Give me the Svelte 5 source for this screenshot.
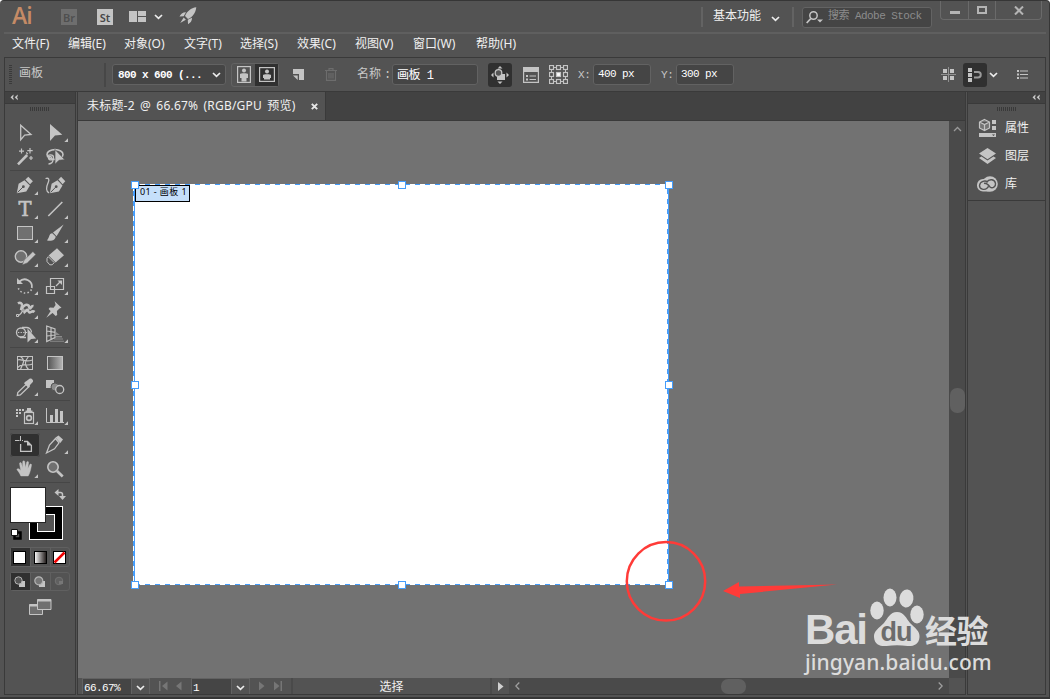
<script lang="ts">
  type Tool = { id: string; icon: string; more?: boolean };

  const menus = [
    { label: "文件(F)", w: 56 },
    { label: "编辑(E)", w: 56 },
    { label: "对象(O)", w: 60 },
    { label: "文字(T)", w: 56 },
    { label: "选择(S)", w: 57 },
    { label: "效果(C)", w: 58 },
    { label: "视图(V)", w: 58 },
    { label: "窗口(W)", w: 63 },
    { label: "帮助(H)", w: 50 },
  ];

  // Icons are drawn in a 30x24 cell.
  const groups: Tool[][] = [
    [
      { id: "direct", icon: `<path d="M10.700 4.300v14.400l4-4.600 6.300-.6z" fill="none" stroke="currentColor" stroke-width="1.300"/>` },
      { id: "select", more: true, icon: `<path d="M10 3v17l5-5.400 7.300-.9z"/>` },
      { id: "wand", icon: `<path d="M8 19.300L17.200 10" stroke="currentColor" stroke-width="2.600"/><path d="M11.500 3.600v5M9 6.100h5M20 3v5.400M17.300 5.700h5.400M21 11v4M19 13h4M16.200 7.500l1.600 1.600" stroke="currentColor" stroke-width="1.200"/>` },
      { id: "lasso", icon: `<ellipse cx="15" cy="9.500" rx="8" ry="4.900" fill="none" stroke="currentColor" stroke-width="1.600"/><path d="M7.500 12c0-3 6-3 6 .4s-5 3.200-5 .6 3.200-1.600 3.200.2M13 14c.5 3-1.500 4.800-4.500 5" fill="none" stroke="currentColor" stroke-width="1.300"/><path d="M15 4.500v14.800l4-4 5.800-.6z" stroke="#535353" stroke-width=".7"/>` },
    ],
    [
      { id: "pen", more: true, icon: `<path d="M6.800 19.200l1.800-9.400 5.900-3.600 5.400 5.300-3.600 5.900z"/><path d="M15.400 5.400l2.900-2.700 4.600 4.600-2.900 2.900z"/><path d="M7.600 18.400l5.400-5.400" stroke="#535353"/><circle cx="13.400" cy="12.700" r="1.400" fill="#535353"/>` },
      { id: "curve", icon: `<path d="M9.800 19.200l1.800-9.400 5.900-3.600 5 5.300-3.600 5.900z"/><path d="M18.400 5.400l2.700-2.700 4.200 4.600-2.700 2.900z"/><path d="M10.600 18.400l5.200-5.400" stroke="#535353"/><circle cx="16.200" cy="12.700" r="1.400" fill="#535353"/><path d="M5.500 4.500c3.500-1 4 1 2.700 4-1.800 4-3 8.500.8 10.300" fill="none" stroke="currentColor" stroke-width="1.300"/>` },
      { id: "type", more: true, icon: `<text x="15" y="18" text-anchor="middle" font-family="DejaVu Serif, serif" font-size="19.500" stroke="currentColor" stroke-width=".600">T</text>` },
      { id: "line", more: true, icon: `<path d="M8.300 18L22.300 4" stroke="currentColor" stroke-width="1.600"/>` },
      { id: "rect", more: true, icon: `<rect x="7.500" y="4.500" width="15" height="13" fill="#707070" stroke="currentColor"/>` },
      { id: "brush", more: true, icon: `<path d="M23.600 2.600L13 10.600l3.600 3.600z" /><path d="M12.300 11.200c-3.700 0-2.600 5-5.500 7 3.600 1.300 9 .2 8.800-3.700z"/>` },
      { id: "shaper", more: true, icon: `<circle cx="11" cy="10.500" r="5.700" fill="#707070" stroke="currentColor" stroke-width="1.400"/><path d="M12.200 19l1.900-4.900 8.800-8.500 2.900 2.900-8.500 8.400z" stroke="#535353" stroke-width=".5"/>` },
      { id: "eraser", more: true, icon: `<path d="M17 2.300l7 6.900-8.400 7.300-7-6.900z"/><path d="M8.300 10.700l5.900 5.900-2 2.200H9.800L7 15.600v-3.200z" fill="none" stroke="currentColor"/>` },
    ],
    [
      { id: "rotate", more: true, icon: `<path d="M9.500 7.500A7.300 7.300 0 0 1 21.800 14" fill="none" stroke="currentColor" stroke-width="1.800"/><path d="M21.500 15.500A7.300 7.300 0 0 1 8.300 14" fill="none" stroke="currentColor" stroke-width="1.500" stroke-dasharray="1.500 2.200"/><path d="M7 4v6h6z"/>` },
      { id: "scale", more: true, icon: `<path d="M10.500 4.500h13v11h-13zM6.500 12.500h8v7h-8z" fill="none" stroke="currentColor" stroke-width="1.200"/><path d="M16 12l4.500-4.500" stroke="currentColor" stroke-width="1.200"/><path d="M17.500 6.500H22V11z"/>` },
      { id: "warp", more: true, icon: `<path d="M8 5.500c2-1.500 4.500-.5 4 2.500l-1 4c2-4 5-6.500 7.500-4.500 1 1 .5 3 1.500 3s1-3 3.500-2.500M13.500 15c2-1 3.500-4.500 4.500-2.500s1.500 2.500 3 1.500 2.500-1 3.500 0" fill="none" stroke="currentColor" stroke-width="2.600"/><path d="M7.500 17.500c3 0 4-3 5.500-5.500" fill="none" stroke="currentColor" stroke-width="1.200"/><path d="M6.500 16.500h2v2h-2zM12 11h2v2h-2z" fill="#535353" stroke="currentColor"/>` },
      { id: "pin", more: true, icon: `<path d="M14.600 3.200l6.900 6.500-2 .8-2.600 2.600.3 3.800-1.600 1-7-7 1.200-1.500 3.800.4 2-2.700zM10.800 12.800l2 2-6.500 5z"/>` },
      { id: "builder", more: true, icon: `<circle cx="11" cy="10.500" r="4.500" fill="none" stroke="currentColor" stroke-width="1.300"/><path d="M12 5.500h5a5 5 0 0 1 4.500 5M10 15.500h6" fill="none" stroke="currentColor" stroke-width="1.300"/><path d="M8 10.500h10" stroke="currentColor" stroke-dasharray="1.300 1.300"/><path d="M17.500 6.500v14l3.600-3.500 5-.500z"/>` },
      { id: "perspective", more: true, icon: `<path d="M6.700 4v15.500L15 15.500V7zM11 5.700v11.700M7 9l8 1.300M7 14l8-1" fill="none" stroke="currentColor" stroke-width="1.200"/><path d="M16 10l4 3h-4zM16 14h6v1.500h-6zM14 16.500h9v1h-9zM10 18.800h14v1H10z" opacity=".5"/>` },
    ],
    [
      { id: "mesh", icon: `<rect x="7.500" y="5.500" width="15" height="13" fill="none" stroke="currentColor"/><path d="M7.500 9c4-2 6 3 15 0M7.500 17c4-6 9-1 15-4M10.500 5.500c6 4 2 7 0 13M18.500 5.500c-3 4-5 7 0 13" fill="none" stroke="currentColor" stroke-width="1.200"/>` },
      { id: "gradient", icon: `<defs><linearGradient id="tg"><stop offset="0" stop-color="#535353"/><stop offset="1" stop-color="#b5b5b5"/></linearGradient></defs><rect x="7.500" y="5.500" width="15" height="13" fill="url(#tg)" stroke="currentColor"/>` },
      { id: "dropper", more: true, icon: `<path d="M7.300 20.500l.500-3 8.500-8.200 2.500 2.500-8.500 8.200z" fill="none" stroke="currentColor" stroke-width="1.300"/><path d="M15 7l1.500-1 3-2.300c1.800-1 4.500 1.300 3.300 3.300L20 10l-.500 2-1 .8L14 8.200z"/>` },
      { id: "blend", icon: `<path d="M6 5h8v8H6z"/><circle cx="15" cy="12" r="4" fill="#8b8b8b" stroke="#535353"/><circle cx="19.700" cy="14.500" r="4" fill="#535353" stroke="currentColor" stroke-width="1.300"/>` },
    ],
    [
      { id: "spray", more: true, icon: `<path d="M6 5h2v2H6zM9 5h2v2H9zM12 5h2v2h-2zM6 8h2v2H6zM9 8h2v2H9zM6 11h2v2H6zM17 4h4v3h-4zM15.500 6.500h7v2h-7z"/><rect x="14.500" y="8.500" width="9" height="11" fill="none" stroke="currentColor" stroke-width="1.200"/><circle cx="19" cy="14" r="2.400" fill="none" stroke="currentColor" stroke-width="1.600"/>` },
      { id: "graph", more: true, icon: `<path d="M6.500 4v14.500H24" fill="none" stroke="currentColor"/><path d="M10 11h3v7h-3zM15 5h3v13h-3zM20 7h3v11h-3z"/>` },
    ],
    [
      { id: "artboard", icon: `<path d="M10.500 3v5M5 7.500h4.500M12 7.500h1" stroke="currentColor"/><path d="M10.600 11v7.400h10.800v-6l-3.900-3.900H14" fill="none" stroke="currentColor" stroke-width="1.300"/><path d="M17 8v4.500h5z"/>` },
      { id: "slice", more: true, icon: `<path d="M6.500 20L9.500 12l6-6.500 3.500 4.300-4.500 6z" fill="none" stroke="currentColor" stroke-width="1.300"/><path d="M15.500 4.500L18.500 2.500l4.500 4-2.700 3.500zM6.500 20L14 12"/>` },
      { id: "hand", more: true, icon: `<path d="M10.800 19c-1-3-3-5-4-6.600.8-1.400 2.600-.7 3.900 1L9.500 6.500c.2-1.300 1.700-1.300 2 0l1.100 4.300L12.700 4.700c.3-1.300 1.900-1.200 2.100 0l.6 5.800 1.300-5.400c.5-1.200 1.900-.8 1.900.4l-.8 6 2-4c.7-1 2-.4 1.700.8-.7 3.300-1.300 7.700-3.300 10.700z" stroke="currentColor" stroke-width=".4"/>` },
      { id: "zoom", icon: `<circle cx="13" cy="10" r="5.200" fill="#707070" stroke="currentColor" stroke-width="1.600"/><path d="M17 14l5.700 5.500" stroke="currentColor" stroke-width="2.700"/>` },
    ],
  ];

  const handleX = [2, 269, 536];
  const handleY = [1, 201, 401];
  const handles = handleY
    .flatMap((y) => handleX.map((x) => ({ x, y })))
    .filter((h) => h.x !== handleX[1] || h.y !== handleY[1]);

  const refPoints = [0, 1, 2].flatMap((r) => [0, 1, 2].map((c) => ({ x: 0.5 + c * 7, y: 0.5 + r * 7 })));

  let active = $state("artboard");
  let artboardName = $state("画板 1");
  let posX = $state("400 px");
  let posY = $state("300 px");
</script>

{#snippet chevron()}
  <svg class="chev" width="9" height="6" viewBox="0 0 9 6"><path d="M1 1l3.500 3.300L8 1" fill="none" stroke="currentColor" stroke-width="1.700" /></svg>
{/snippet}

{#snippet collapse()}
  <svg width="8" height="7" viewBox="0 0 8 7"><path d="M3.500.5L.5 3.300l3 2.900V4.300L2.700 3.300l.8-1zM7.700.5l-3 2.800 3 2.900V4.300L6.900 3.300l.8-1z" fill="currentColor" /></svg>
{/snippet}

<div class="window">
  <header class="titlebar">
    <span class="logo">Ai</span>
    <span class="appbox dim">Br</span>
    <span class="appbox">St</span>
    <svg class="layout" width="17" height="11" viewBox="0 0 17 11"><path d="M0 0h8v11H0zM9 0h8v5H9zM9 6h8v5H9z" fill="#c4c4c4" /></svg>
    {@render chevron()}
    <svg class="rocket" width="18" height="18" viewBox="0 0 18 18"><path d="M17.300.2C12 .8 7.800 4.500 6 9l3 3c4.500-2 7.700-6 8.300-11.800zM7 5.200C4 5 1.500 7 .5 9.500l4.200-.2zM13 10.800c.2 3-1.500 5.200-4 6.500l-.2-4.500zM4.700 10.500L1.200 16l5.700-3.300z" fill="#c4c4c4" /></svg>
    <i class="vsep first"></i>
    <span class="workspace">基本功能</span>
    <span class="wschev">{@render chevron()}</span>
    <i class="vsep second"></i>
    <div class="search">
      <svg width="17" height="13" viewBox="0 0 17 13"><circle cx="7.500" cy="4.500" r="3.700" fill="none" stroke="#c4c4c4" stroke-width="1.500" /><path d="M4.800 7.500L.7 12" stroke="#c4c4c4" stroke-width="1.800" /><path d="M11 8.500h6l-3 3z" fill="#c4c4c4" /></svg>
      <span>搜索 Adobe Stock</span>
    </div>
    <div class="winbtns">
      <button aria-label="Minimize"><svg width="10" height="14" viewBox="0 0 10 14"><path d="M0 8h10v3H0z" /></svg></button>
      <button aria-label="Maximize"><svg width="10" height="10" viewBox="0 0 10 10"><path d="M1 2h8v6H1z" fill="none" stroke="#b4b4b4" stroke-width="2" /></svg></button>
      <button aria-label="Close"><svg width="10" height="9" viewBox="0 0 10 9"><path d="M1 .5l8 8M9 .5l-8 8" stroke="#b4b4b4" stroke-width="2" /></svg></button>
    </div>
  </header>

  <nav class="menubar">
    {#each menus as m (m.label)}<span style:width="{m.w}px">{m.label}</span>{/each}
  </nav>

  <div class="control">
    <i class="grip"></i>
    <span class="lbl title">画板</span>
    <i class="csep"></i>
    <div class="preset"><b>800 x 600 (...</b>{@render chevron()}</div>
    <div class="orient">
      <span><svg width="14" height="17" viewBox="0 0 14 17"><rect x=".6" y=".6" width="12.800" height="15.800" fill="none" stroke="#c4c4c4" stroke-width="1.200" /><circle cx="7" cy="4.500" r="2" /><path d="M3 8c0-1 8-1 8 0v4H9.500v3.500h-5V12H3z" /></svg></span>
      <span class="on"><svg width="16" height="15" viewBox="0 0 16 15"><rect x=".6" y=".6" width="14.800" height="13.800" fill="none" stroke="#c4c4c4" stroke-width="1.200" /><circle cx="8" cy="4.500" r="2" /><path d="M4 8c0-1 8-1 8 0v3h-1v1.500H5V11H4z" /></svg></span>
    </div>
    <svg class="newab" width="11" height="11" viewBox="0 0 11 11"><path d="M0 0h11v11H6V5H0zM0 6.500h4.700V11z" fill="#c4c4c4" /></svg>
    <svg class="trash" width="12" height="13" viewBox="0 0 12 13"><path d="M0 2.500h12M4 2V.6h4V2M1.500 3v9.400h9V3M4 5v5.500M6 5v5.500M8 5v5.500" fill="none" stroke="#6d6d6d" stroke-width="1.100" /></svg>
    <span class="lbl name">名称<em>:</em></span>
    <input class="field wide" bind:value={artboardName} />
    <span class="sq move"><svg width="18" height="18" viewBox="0 0 18 18"><path d="M9 0l2.500 2.500h-5zM9 18l2.500-2.500h-5zM0 9l2.500-2.500v5zM18 9l-2.500-2.500v5zM9 8h5v6H6v-3z" fill="#c4c4c4" /><circle cx="7.500" cy="7" r="3.300" fill="#555" stroke="#c4c4c4" stroke-width="1.300" /></svg></span>
    <svg class="opts" width="16" height="16" viewBox="0 0 16 16"><path d="M0 0h16v5H0zM3 8h2v2H3zM3 11.500h2v2H3zM6.500 8.500H13v1H6.500zM6.500 12H13v1H6.500z" fill="#c4c4c4" /><path d="M.6 4v11.400h14.800V4" fill="none" stroke="#c4c4c4" stroke-width="1.200" /></svg>
    <svg class="refpt" width="19" height="19" viewBox="0 0 19 19">
      <path d="M5 2.500h2M12 2.500h2M5 16.500h2M12 16.500h2M2.500 5v2M2.500 12v2M16.500 5v2M16.500 12v2" stroke="#c4c4c4" />
      {#each refPoints as p, i (i)}
        <rect x={p.x} y={p.y} width="4" height="4" fill={i === 4 ? "#fff" : "none"} stroke="#c4c4c4" stroke-width="1.200" />
      {/each}
    </svg>
    <span class="lbl px">X:</span>
    <input class="field" bind:value={posX} />
    <span class="lbl py">Y:</span>
    <input class="field" bind:value={posY} />
    <span class="grow"></span>
    <svg class="cross" width="15" height="15" viewBox="0 0 15 15"><path d="M2 2h4v4H2zM9 2h4v4H9zM2 9h4v4H2zM9 9h4v4H9z" fill="#c4c4c4" /><path d="M7.500 0v15M0 7.500h15" stroke="#909090" /></svg>
    <span class="sq snap"><svg width="14" height="14" viewBox="0 0 14 14"><path d="M0 0h4v4H0zM0 5h4v4H0zM0 10h4v4H0z" fill="#c4c4c4" /><path d="M6 4h4a2.700 2.700 0 0 1 0 5.500H6" fill="none" stroke="#9a9a9a" stroke-width="2" /></svg></span>
    {@render chevron()}
    <svg class="list" width="11" height="9" viewBox="0 0 11 9"><path d="M0 0h2v2H0zM0 3.500h2v2H0zM0 7h2v2H0zM3 .5h8v1H3zM3 4h8v1H3zM3 7.500h8v1H3z" fill="#c4c4c4" /></svg>
  </div>

  <div class="body">
    <aside class="toolbox">
      <div class="phead">{@render collapse()}</div>
      <div class="ridges"></div>
      <div class="tools">
        {#each groups as g, gi (gi)}
          <div class="group">
            {#each g as t (t.id)}
              <button class="tool" class:active={active === t.id} aria-label={t.id} onclick={() => (active = t.id)}>
                <svg width="30" height="24" viewBox="0 0 30 24" fill="currentColor">
                  {@html t.icon}
                  {#if t.more}<path d="M28 17.300V21h-3.700z" />{/if}
                </svg>
              </button>
            {/each}
          </div>
        {/each}
      </div>
      <svg class="swatches" width="60" height="56" viewBox="10 487 60 56">
        <rect x="29.500" y="507.500" width="33" height="33" fill="#000" stroke="#fff" />
        <rect x="37.500" y="515.500" width="17" height="17" fill="#535353" stroke="#fff" />
        <rect x="10.500" y="488.500" width="35" height="35" fill="#fff" stroke="#262626" />
        <path d="M58 493.500h2.500q2 0 2 2v3" fill="none" stroke="#c4c4c4" stroke-width="1.500" />
        <path d="M58.500 490v7l-4-3.500zM59 497h7l-3.500 4z" fill="#c4c4c4" />
        <path d="M14.500 533.500h6v6h-6z" fill="none" stroke="#000" stroke-width="2.500" />
        <path d="M11.500 530.500h6v6h-6z" fill="#fff" stroke="#111" />
      </svg>
      <div class="trio paint">
        <span class="on"><svg width="13" height="13"><rect x=".5" y=".5" width="12" height="12" fill="#fff" stroke="#000" /></svg></span>
        <span><svg width="13" height="13"><defs><linearGradient id="pg"><stop offset="0" stop-color="#fff" /><stop offset="1" stop-color="#1b1514" /></linearGradient></defs><rect x=".5" y=".5" width="12" height="12" fill="url(#pg)" stroke="#000" /></svg></span>
        <span><svg width="13" height="13"><rect x=".5" y=".5" width="12" height="12" fill="#fff" stroke="#000" /><path d="M1.500 11.500l10-10" stroke="#f00000" stroke-width="2.500" /></svg></span>
      </div>
      <div class="trio modes">
        <span class="on"><svg width="12" height="12"><path d="M5 5h6v6H5z" fill="#c4c4c4" /><circle cx="4.500" cy="4.500" r="3.700" fill="#555" stroke="#b4b4b4" /></svg></span>
        <span><svg width="12" height="12"><path d="M5 5h6v6H5z" fill="#c4c4c4" /><circle cx="4.800" cy="4.800" r="4" fill="#777" stroke="#b4b4b4" stroke-width="1.200" /></svg></span>
        <span><svg width="12" height="12"><circle cx="5" cy="5" r="3.800" fill="#606060" stroke="#727272" /><path d="M5 5h4v3H5z" fill="#777" /></svg></span>
      </div>
      <svg class="screen" width="23" height="17" viewBox="0 0 23 17"><path d="M.5 5.500h13v10H.5z" fill="#707070" stroke="#c4c4c4" /><path d="M.5 6.500h13" stroke="#c4c4c4" stroke-width="2" /><path d="M8.500.5h13.500v10H8.500z" fill="#707070" stroke="#c4c4c4" /><path d="M8.500 1.500h13.500" stroke="#c4c4c4" stroke-width="2" /></svg>
    </aside>

    <main class="doc">
      <div class="tabs">
        <div class="tab">
          <span>未标题-2 @ 66.67% (RGB/GPU 预览)</span>
          <svg width="7" height="7" viewBox="0 0 7 7"><path d="M.8.8l5.400 5.400M6.200.8L.8 6.200" stroke="#e6e6e6" stroke-width="1.900" /></svg>
        </div>
      </div>
      <div class="view">
        <div class="canvas">
          <div class="artboard">
            <svg width="536" height="401" viewBox="0 0 536 401" stroke="#459dfb">
              <path d="M2 .5H536M2 400.500H536M.5 7V401M534.500 5V401" stroke-dasharray="5 5" />
              <path d="M1.500 0V401M535.500 0V401" />
            </svg>
            <span class="abname">01 - 画板 1</span>
            {#each handles as h (h.x + "-" + h.y)}
              <i class="handle" style:left="{h.x - 4}px" style:top="{h.y - 4}px"></i>
            {/each}
          </div>
          <svg class="note" width="214" height="86" viewBox="625 538 214 86">
            <circle cx="666" cy="581.300" r="39.200" fill="none" stroke="#ff3b38" stroke-width="2.500" />
            <path d="M723 591l16-9v4.500l98-2-97 9.500v4z" fill="#ff3b38" />
          </svg>
        </div>
        <div class="vscroll">
          <svg width="9" height="6" viewBox="0 0 9 6"><path d="M1 5l3.500-3.500L8 5" fill="none" stroke="#9a9a9a" stroke-width="1.300" /></svg>
          <i class="vthumb"></i>
        </div>
      </div>
      <footer class="status">
        <span class="num zoomv">66.67%</span>
        <span class="drop">{@render chevron()}</span>
        <svg class="step s1" width="28" height="10" viewBox="0 0 28 10"><path d="M1 0h1.500v10H1zM9.500.5v9L4 5zM23.500.5v9L18 5z" fill="#767676" /></svg>
        <span class="num page">1</span>
        <span class="drop">{@render chevron()}</span>
        <svg class="step s2" width="28" height="10" viewBox="0 0 28 10"><path d="M1 .5v9L6.500 5zM16 .5v9L21.500 5zM22.500 0H24v10h-1.500z" fill="#767676" /></svg>
        <span class="mode">选择</span>
        <span class="play"><svg width="6" height="9" viewBox="0 0 6 9"><path d="M0 0l5.500 4.500L0 9z" fill="#d0d0d0" /></svg></span>
        <div class="hscroll">
          <svg width="5" height="8" viewBox="0 0 5 8"><path d="M4.300.5L.8 4l3.500 3.500" fill="none" stroke="#a0a0a0" stroke-width="1.300" /></svg>
          <i class="hthumb"></i>
          <svg class="next" width="5" height="8" viewBox="0 0 5 8"><path d="M.7.5L4.200 4 .7 7.500" fill="none" stroke="#a0a0a0" stroke-width="1.300" /></svg>
        </div>
        <i class="corner"></i>
      </footer>
    </main>

    <aside class="dock">
      <div class="phead right">{@render collapse()}</div>
      <div class="ridges"></div>
      <div class="panels">
        <div class="panel">
          <svg width="22" height="20" viewBox="0 0 22 20"><path d="M7.500 1.500l5 2.500v6l-5 2.500-5-2.500V4zM2.500 4l5 2.500 5-2.500M7.500 6.500v6" fill="#757575" stroke="#c4c4c4" stroke-width="1.200" /><path d="M15 2h4v4h-4zM15 8h4v4h-4zM2 15h17v4H2z" fill="#c4c4c4" /><path d="M15 16.500h3l-1.500 1.500z" fill="#444" /></svg>
          <span>属性</span>
        </div>
        <div class="panel">
          <svg width="22" height="20" viewBox="0 0 22 20"><path d="M10.500 2l8.500 5.600-8.500 5.600L2 7.600zM2 12l2.500-1.500 6 4 6-4L19 12l-8.500 6z" fill="#c4c4c4" /></svg>
          <span>图层</span>
        </div>
        <div class="panel">
          <svg width="22" height="20" viewBox="0 0 22 20"><rect x="0" y="5" width="17" height="12.500" rx="6" fill="#c4c4c4" /><circle cx="13" cy="10" r="7.800" fill="#c4c4c4" /><path d="M10.500 8C8.500 6 3 7 2.500 11.500c0 4 5 5 7.700 2.500l1.300-1.500M7 9.500c2.500-1 4 1 6 3.500 2.500 2 6-.5 5.500-3.500-.5-4-6-5.500-9-1" fill="none" stroke="#535353" stroke-width="1.400" /></svg>
          <span>库</span>
        </div>
      </div>
    </aside>
  </div>

  <div class="watermark">
    <div class="wm-top">
      <span class="bai">Bai</span>
      <svg width="56" height="60" viewBox="0 0 56 60">
        <ellipse cx="8" cy="23.500" rx="6.700" ry="9" />
        <ellipse cx="21" cy="10.500" rx="6.500" ry="9" />
        <ellipse cx="37.500" cy="11.500" rx="7" ry="9" transform="rotate(8 37.500 11)" />
        <ellipse cx="48" cy="27.500" rx="6.700" ry="9" />
        <path d="M28 25c7 0 9 6 13 11 5 5 10 8 9.500 14-.5 8-7 9.500-12 9-7-1-14-1-21 0-6 .5-12-1-12.500-9-.5-6 5-9 10-14 4-5 6-11 13-11z" />
        <text x="27" y="54" text-anchor="middle">du</text>
      </svg>
      <span class="jy">经验</span>
    </div>
    <div class="wm-url">jingyan.baidu.com</div>
  </div>
</div>

<style>
  :global(body) { background: #fff; }
  .window {
    --bg: #535353; --line: #3a3a3a; --dark: #424242; --ico: #c4c4c4;
    --ui: "Noto Sans", "Noto Sans CJK SC", sans-serif;
    --mono: "Liberation Mono", "Noto Sans CJK SC", monospace;
    position: relative; display: flex; flex-direction: column; box-sizing: border-box;
    width: 1050px; height: 699px; padding: 0 3px 2px 4px; overflow: hidden;
    background: var(--bg); border: 1px solid #363636; border-width: 1px 1px 2px 0; border-radius: 4px 4px 0 0;
    font: 12px/16px var(--ui); color: #f0f0f0;
  }
  svg { display: block; flex: none; }
  i { display: block; flex: none; }
  button { padding: 0; border: 0; background: none; }
  .chev { color: #ececec; }

  .titlebar { display: flex; align-items: center; height: 31px; flex: none; border-bottom: 2px solid #5f5f5f; box-sizing: content-box; }
  .logo { width: 48px; padding-left: 8px; margin: -4px 1px 0 0; font: 600 23px/26px "Open Sans", sans-serif; color: #c58b66; letter-spacing: -1px; }
  .appbox { width: 16px; height: 16px; margin-right: 20px; background: #c4c4c4; color: #484848; font: 600 11px/17px "Noto Sans", sans-serif; text-align: center; overflow: hidden; }
  .appbox.dim { background: #6e6e6e; color: #4f4f4f; }
  .layout { margin: -1px 8px 0 -4px; }
  .rocket { margin: -1px 0 0 16px; }
  .vsep { width: 2px; height: 20px; background: #636363; margin-top: 1px; }
  .vsep.first { margin-left: auto; }
  .workspace { width: 58px; margin: -1px 0 0 10px; white-space: nowrap; }
  .wschev { margin-top: 4px; }
  .vsep.second { margin: 1px 8px 0 12px; }
  .search { display: flex; align-items: center; box-sizing: border-box; width: 130px; height: 21px; margin-top: 2px; padding-left: 3px; gap: 5px; background: #454545; border: 1px solid #636363; border-radius: 3px; color: #8c8c8c; font: 11px/14px var(--mono); letter-spacing: -0.55px; white-space: nowrap; }
  .search span { margin-top: -4px; }
  .winbtns { display: grid; grid-template-columns: 27px 27px 46px; align-self: flex-start; height: 18px; margin: 0 4px 0 8px; border: 1px solid #6a6a6a; border-top: 0; border-radius: 0 0 4px 4px; }
  .winbtns button { display: grid; place-items: center; fill: #b4b4b4; height: 18px; }
  .winbtns button + button { border-left: 1px solid #6a6a6a; }

  .menubar { display: flex; height: 23px; flex: none; padding-left: 8px; border-bottom: 1px solid var(--line); line-height: 20px; }
  .menubar span { white-space: nowrap; }

  .control { display: flex; align-items: center; height: 33px; flex: none; padding-left: 4px; border: 1px solid var(--line); border-width: 0 1px 1px; font-family: var(--mono); font-size: 11px; }
  .grip { width: 3px; height: 19px; background: repeating-linear-gradient(#3a3a3a 0 1px, transparent 1px 2px); }
  .lbl { color: #c8c8c8; white-space: nowrap; letter-spacing: -0.4px; }
  .lbl em { margin-left: 3px; font-style: normal; }
  .lbl.title { width: 85px; margin-left: 7px; font-size: 12px; letter-spacing: 0; margin-top: -1px; }
  .csep { width: 2px; height: 24px; background: #474747; margin-right: 6px; }
  .preset { display: flex; align-items: center; justify-content: space-between; box-sizing: border-box; width: 114px; height: 21px; padding: 0 4px 0 5px; background: #454545; border: 1px solid #626262; border-radius: 3px; letter-spacing: -0.6px; color: #fff; }
  .orient { display: flex; box-sizing: border-box; width: 48px; height: 24px; margin-left: 5px; border: 1px solid #636363; border-radius: 3px; }
  .orient span { display: grid; place-items: center; flex: 1; fill: #c4c4c4; }
  .on { background: #303030; }
  .newab { margin-left: 14px; }
  .trash { margin-left: 21px; }
  .lbl.name { width: 35px; margin-left: 20px; letter-spacing: 0; font-size: 12px; }
  .field { box-sizing: border-box; width: 58px; height: 21px; padding: 0 0 2px 4px; margin: 0 0 0 4px; background: #454545; border: 1px solid #626262; border-radius: 3px; color: #fff; font: 11px/16px var(--mono); letter-spacing: -0.6px; outline: none; }
  .field.wide { width: 86px; margin-left: 0; font-size: 12px; letter-spacing: -0.5px; }
  .sq { display: grid; place-items: center; width: 24px; height: 24px; background: #303030; border-radius: 3px; }
  .move { margin-left: 10px; }
  .opts { margin-left: 11px; }
  .refpt { margin-left: 10px; }
  .lbl.px { width: 11px; margin-left: 10px; }
  .lbl.py { width: 11px; margin-left: 10px; }
  .grow { flex: 1; }
  .cross { margin-right: 7px; }
  .snap { margin-right: 2px; }
  .list { margin: 0 17px 0 19px; }

  .body { display: flex; flex: 1; min-height: 0; }
  .toolbox { box-sizing: border-box; width: 72px; border: 1px solid var(--line); border-top: 0; flex: none; }
  .phead { display: flex; align-items: center; height: 11px; padding-left: 5px; background: var(--dark); border-bottom: 1px solid var(--line); color: #c8c8c8; }
  .phead.right { justify-content: flex-end; padding: 0 5px 0 0; }
  .ridges { width: 20px; height: 4px; margin: 3px auto 0; background: repeating-linear-gradient(90deg, #393939 0 1px, transparent 1px 2px); }
  .tools { padding: 10px 5px 0; }
  .group { display: grid; grid-template-columns: 30px 30px; grid-auto-rows: 24px; padding-bottom: 1px; margin-bottom: 3px; border-bottom: 1px solid #464646; }
  .group:nth-child(2) { margin-bottom: 2px; }
  .tool { color: var(--ico); }
  .tool.active { background: #303030; border-radius: 3px; box-shadow: inset 0 0 0 1px var(--bg); }
  .swatches { margin: 2px 0 5px 5px; }
  .trio { display: grid; grid-template-columns: 19px 20px 19px; box-sizing: border-box; width: 60px; height: 20px; margin-left: 5px; border: 1px solid #606060; border-radius: 3px; }
  .trio span { display: grid; place-items: center; padding-right: 1px; }
  .trio span + span { border-left: 1px solid #606060; }
  .paint span:first-child { padding-right: 2px; }
  .modes { margin-top: 5px; height: 19px; }
  .screen { margin: 8px 0 0 24px; }

  .doc { display: flex; flex-direction: column; width: 889px; margin-left: 1px; flex: none; border: 1px solid var(--line); border-top: 0; box-sizing: border-box; }
  .tabs { display: flex; height: 28px; flex: none; background: var(--dark); border-bottom: 1px solid var(--line); }
  .tab { display: flex; align-items: center; box-sizing: border-box; width: 248px; padding: 0 7px 0 9px; justify-content: space-between; background: var(--bg); border-right: 1px solid var(--line); white-space: nowrap; }
  .tab span { word-spacing: 2px; letter-spacing: 0.2px; }
  .view { display: flex; flex: 1; min-height: 0; }
  .canvas { position: relative; flex: 1; background: #727272; }
  .artboard { position: absolute; left: 55px; top: 63px; width: 536px; height: 401px; background: #fff; }
  .abname { position: absolute; left: 2px; top: 1px; box-sizing: border-box; width: 55px; height: 17px; padding-left: 4px; background: #c5dffa; border: 1px solid #000; color: #000; font-size: 9px; line-height: 12px; letter-spacing: 0.4px; white-space: nowrap; }
  .handle { position: absolute; width: 6px; height: 6px; background: #fff; border: 1px solid #459dfb; }
  .note { position: absolute; left: 547px; top: 417px; }
  .vscroll { display: flex; flex-direction: column; align-items: center; width: 16px; padding-top: 5px; box-sizing: border-box; background: #4a4a4a; }
  .vthumb { width: 15px; height: 25px; margin-top: 256px; border-radius: 7px; background: #606060; }
  .status { display: flex; align-items: stretch; height: 16px; flex: none; font: 11px/18px var(--mono); letter-spacing: -0.6px; }
  .num { box-sizing: border-box; height: 16px; background: #454545; border: 1px solid #626262; border-bottom: 0; padding-left: 1px; color: #fff; line-height: 18px; }
  .zoomv { width: 50px; margin-left: 4px; }
  .page { width: 41px; }
  .drop { display: grid; place-items: center; width: 18px; border: 1px solid #626262; border-width: 1px 1px 0 0; box-sizing: border-box; padding-top: 3px; }
  .step { align-self: center; }
  .s1 { margin: 0 5px 0 8px; }
  .s2 { margin: 0 5px 0 8px; }
  .mode { width: 201px; border: 1px solid #4a4a4a; border-width: 0 2px; text-align: center; font-size: 12px; line-height: 21px; letter-spacing: 0; box-sizing: border-box; }
  .play { display: grid; place-items: center; width: 17px; }
  .hscroll { display: flex; align-items: center; flex: 1; padding: 0 6px 0 6px; background: #4a4a4a; }
  .hthumb { width: 25px; height: 15px; margin-left: 201px; border-radius: 7px; background: #606060; }
  .next { margin-left: auto; }
  .corner { width: 16px; }

  .dock { box-sizing: border-box; width: 79px; margin-left: 1px; border: 1px solid var(--line); border-top: 0; flex: none; }
  .panels { display: grid; grid-auto-rows: 28px; padding: 3px 0 2px 9px; border-bottom: 1px solid var(--line); }
  .panel { display: flex; align-items: center; gap: 6px; }

  .watermark { position: absolute; left: 805px; top: 586px; width: 190px; color: #dcdcdc; fill: #dcdcdc; }
  .wm-top { display: flex; height: 60px; }
  .bai { width: 64px; margin-top: 25px; font: bold 42px/36px "Liberation Sans", sans-serif; letter-spacing: -1.2px; }
  .watermark text { font: bold 27px "Liberation Sans", sans-serif; fill: #6c6c6c; letter-spacing: -1px; }
  .jy { margin-top: 24px; font: 700 32px/36px "Noto Sans CJK SC", sans-serif; letter-spacing: -0.5px; white-space: nowrap; }
  .wm-url { margin-top: 3px; font: 500 21px/24px "Noto Sans", sans-serif; letter-spacing: 0.1px; }
</style>
